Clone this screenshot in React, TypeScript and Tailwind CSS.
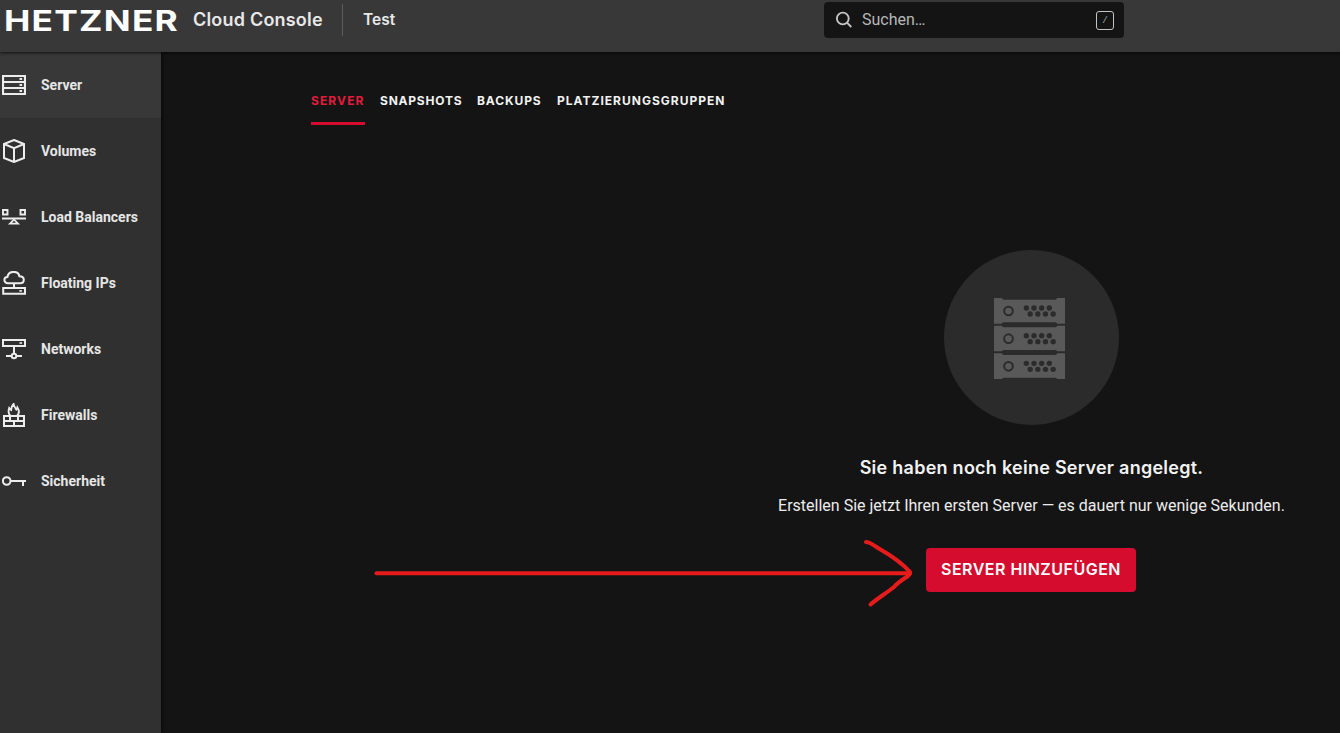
import type { ReactNode } from "react";

const navItems: { label: string; active?: boolean; icon: ReactNode }[] = [
  {
    label: "Server",
    active: true,
    icon: (
      <>
        <path d="M1 3h22v18H1zM1 9h22M1 15h22" strokeWidth="2.2" />
        <path d="M17.5 6h2.6M17.5 12h2.6M17.5 18h2.6" strokeWidth="1.800" />
      </>
    ),
  },
  {
    label: "Volumes",
    icon: <path d="M12 1 22 5v14l-10 4L2 19V5zM2 5l10 4.2L22 5M12 9.2V23" strokeWidth="2" />,
  },
  {
    label: "Load Balancers",
    icon: (
      <>
        <path d="M1 5h4.5v4.5H1zM18.500 5H23v4.500h-4.500zM0 13.500h24" strokeWidth="1.900" />
        <path d="m12 14.500 4 4.200H8z" strokeWidth="1.800" />
      </>
    ),
  },
  {
    label: "Floating IPs",
    icon: (
      <>
        <path
          d="M6 12.2c-2.300 0-3.600-1.400-3.600-3.200s1.400-3 3-3C5.900 3 8.500.9 11.700.9c3.100 0 5.200 1.700 5.700 4.300 2.700 0 4.400 1.500 4.400 3.500s-1.600 3.500-3.800 3.500z"
          strokeWidth="2"
        />
        <path d="M12 12.500V17M1.200 17h21.800v5.800H1.200z" strokeWidth="2" />
        <path d="M17.300 19.900h2.600" strokeWidth="1.600" />
      </>
    ),
  },
  {
    label: "Networks",
    icon: (
      <>
        <path d="M1 3h22v6H1zM12 9v7.500M4 19h5.500M14.500 19H20" strokeWidth="2" />
        <circle cx="12" cy="19" r="2.300" strokeWidth="2" />
        <path d="M17.500 6h2.600" strokeWidth="1.600" />
      </>
    ),
  },
  {
    label: "Firewalls",
    icon: (
      <>
        <path d="M2 13h20v10H2zM2 18h20M8 13v5M16 13v5M12 18v5" strokeWidth="2" />
        <path
          d="M8.200 12.500C6.500 10.800 6.200 8 7.200 5c.700 1 1.200 1.500 1.900 1.900.100-2.500.900-4.300 2.500-5.900.300 2.300 1.500 3.700 2.700 5.500.600-.500.900-1.200 1.100-2 1.900 3 1.900 6-.100 8"
          strokeWidth="1.900"
        />
      </>
    ),
  },
  {
    label: "Sicherheit",
    icon: (
      <>
        <circle cx="4.700" cy="12" r="3.800" strokeWidth="2" />
        <path d="M8.400 11.900H24M21 11.900V17" strokeWidth="2" />
      </>
    ),
  },
];

const tabs = [
  { label: "SERVER", style: "w-[54px] tracking-[1.100px] border-[#d50c2d] text-[#e31c3d]" },
  { label: "SNAPSHOTS", style: "w-[82px] tracking-[0.780px] border-transparent text-[#f2f2f2]" },
  { label: "BACKUPS", style: "w-[65px] tracking-[0.900px] border-transparent text-[#f2f2f2]" },
  { label: "PLATZIERUNGSGRUPPEN", style: "w-[170px] tracking-[1.000px] border-transparent text-[#f2f2f2]" },
];

function Header() {
  return (
    <header className="relative z-10 flex h-[52px] shrink-0 items-start bg-[#383838] shadow-[0_1px_3px_rgba(0,0,0,0.7)]">
      <svg className="mt-[2px] h-[38px] w-[186px] shrink-0 overflow-visible" viewBox="0 0 186 38">
        <text
          x="4"
          y="28.700"
          textLength="175"
          lengthAdjust="spacingAndGlyphs"
          fill="#fff"
          className="font-['Inter'] text-[28.500px] font-bold tracking-[1px]"
        >
          HETZNER
        </text>
      </svg>
      <span className="ml-[7px] mt-[6px] w-[149px] whitespace-nowrap font-['Inter',sans-serif] text-[18px] font-semibold leading-7 tracking-[0.200px] text-[#e8e8e8]">
        Cloud Console
      </span>
      <span className="mt-1 h-8 w-px shrink-0 bg-[#5c5c5c]" />
      <span className="ml-5 mt-[6px] w-[461px] font-['Inter',sans-serif] text-[15.500px] font-semibold leading-7 text-[#e8e8e8]">
        Test
      </span>
      <div className="mt-[2px] flex h-9 w-[300px] shrink-0 items-center rounded bg-[#141414] pl-[11px] pr-[10px] text-[#b8b8b8]">
        <svg className="h-[18px] w-[18px]" viewBox="0 0 18 18" fill="none" stroke="#c4c4c4" strokeWidth="1.900">
          <circle cx="7.800" cy="7.500" r="5.900" />
          <path d="m12 11.700 4.300 4.300" />
        </svg>
        <span className="ml-[9px] flex-1 font-['Roboto',sans-serif] text-base leading-5">Suchen…</span>
        <span className="mt-[1px] flex h-[19px] w-[18px] items-center justify-center rounded-[3px] border border-[#c4c4c4] font-['Roboto',sans-serif] text-[9px] italic leading-none">
          /
        </span>
      </div>
    </header>
  );
}

function Sidebar() {
  return (
    <nav className="w-[161px] shrink-0 bg-[#303030] shadow-[1px_0_3px_rgba(0,0,0,0.7)]">
      {navItems.map((item) => (
        <a
          key={item.label}
          className={
            item.active
              ? "flex h-[66px] items-center gap-[15px] bg-[#383838] pl-[2px]"
              : "flex h-[66px] items-center gap-[15px] pl-[2px]"
          }
        >
          <svg className="h-6 w-6 shrink-0" viewBox="0 0 24 24" fill="none" stroke="#ededed">
            {item.icon}
          </svg>
          <span className="whitespace-nowrap font-['Roboto',sans-serif] text-sm font-bold text-[#e6e6e6]">
            {item.label}
          </span>
        </a>
      ))}
    </nav>
  );
}

function ServerRack() {
  return (
    <svg className="-ml-1 mt-px h-[81px] w-[71px]" viewBox="0 0 213 243">
      {[0, 83, 166].map((y) => (
        <g key={y} transform={`translate(0 ${y})`}>
          <path d="M0 0h23q3 5 7 5h153q4 0 7-5h23v77h-23q-3-4-7-4H30q-4 0-7 4H0z" fill="#595959" />
          <circle cx="43.500" cy="39" r="13" fill="none" stroke="#2b2b2b" strokeWidth="6" />
          {[97, 120, 143, 166].map((x) => (
            <g key={x} fill="#2b2b2b">
              <circle cx={x} cy="30" r="8" />
              <circle cx={x + 11.5} cy="48" r="8" />
            </g>
          ))}
        </g>
      ))}
    </svg>
  );
}

function EmptyState() {
  return (
    <section className="ml-[467px] mt-[125px] flex w-[507px] flex-col items-center whitespace-nowrap">
      <div className="flex h-[175px] w-[175px] items-center justify-center rounded-full bg-[#2b2b2b]">
        <ServerRack />
      </div>
      <h1 className="mt-[29px] font-['Inter',sans-serif] text-[18px] font-semibold leading-7 tracking-[0.260px] text-[#f2f2f2]">
        Sie haben noch keine Server angelegt.
      </h1>
      <p className="mt-3 font-['Roboto',sans-serif] text-base leading-6 text-[#ececec]">
        Erstellen Sie jetzt Ihren ersten Server — es dauert nur wenige Sekunden.
      </p>
      <button className="mr-[1px] mt-[30px] h-11 w-[210px] rounded bg-[#d50c2d] pb-[2px] font-['Inter',sans-serif] text-base font-semibold tracking-[0.480px] text-white">
        SERVER HINZUFÜGEN
      </button>
    </section>
  );
}

function Arrow() {
  return (
    <svg
      className="pointer-events-none absolute left-[370px] top-[536px] z-20 h-[74px] w-[546px]"
      viewBox="370 536 546 74"
      fill="none"
      stroke="#e61b1b"
      strokeWidth="4"
      strokeLinecap="round"
      strokeLinejoin="round"
    >
      <path d="M376.500 573.300H910" />
      <path d="M866 542C870 542 873 545 878 548C892 556 903 564 910 572Q910.500 574 908 576C902 580 897 583 894 587C885 594 878 598 870.500 604.500" />
    </svg>
  );
}

export default function App() {
  return (
    <div className="relative flex h-[733px] flex-col overflow-hidden bg-[#141414]">
      <Header />
      <div className="flex flex-1">
        <Sidebar />
        <main className="flex-1 pl-[150px] pt-[38px]">
          <div className="flex gap-[15px]">
            {tabs.map((tab) => (
              <a
                key={tab.label}
                className={`h-[35px] whitespace-nowrap border-b-[3px] pt-[3px] font-['Inter',sans-serif] text-xs font-bold leading-4 ${tab.style}`}
              >
                {tab.label}
              </a>
            ))}
          </div>
          <EmptyState />
        </main>
      </div>
      <Arrow />
    </div>
  );
}
